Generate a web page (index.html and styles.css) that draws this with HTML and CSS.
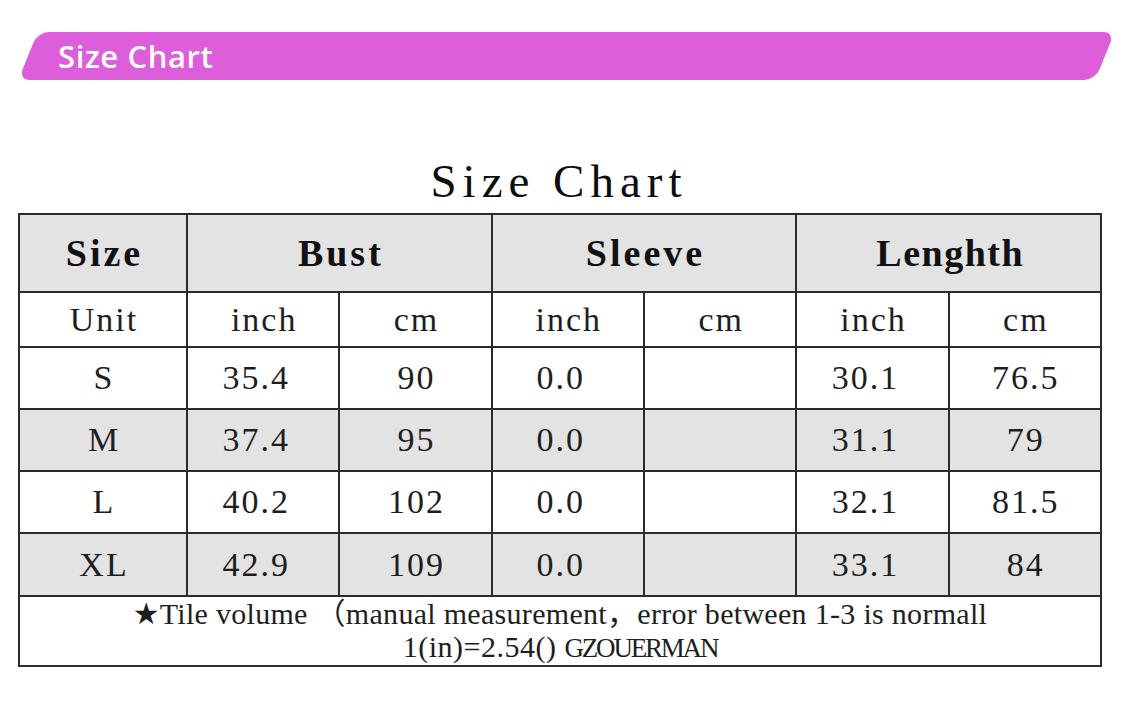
FILE: index.html
```html
<!DOCTYPE html>
<html lang="en">
<head>
<meta charset="utf-8">
<title>Size Chart</title>
<link rel="stylesheet" href="styles.css">
</head>
<body>
<div class="banner"><span class="banner-text">Size Chart</span></div>
<div class="sheet">
  <h1 class="title">Size Chart</h1>
  <table class="chart">
    <colgroup>
      <col class="col-size">
      <col class="col-val"><col class="col-val">
      <col class="col-val"><col class="col-val">
      <col class="col-val"><col class="col-val">
    </colgroup>
    <tr class="row-head">
      <th>Size</th>
      <th colspan="2">Bust</th>
      <th colspan="2">Sleeve</th>
      <th colspan="2" class="th-tight">Lenghth</th>
    </tr>
    <tr class="row-unit">
      <td>Unit</td>
      <td>inch</td>
      <td>cm</td>
      <td>inch</td>
      <td>cm</td>
      <td>inch</td>
      <td>cm</td>
    </tr>
    <tr class="row-data">
      <td>S</td>
      <td class="inch">35.4</td>
      <td>90</td>
      <td class="inch">0.0</td>
      <td></td>
      <td class="inch">30.1</td>
      <td>76.5</td>
    </tr>
    <tr class="row-data row-alt">
      <td>M</td>
      <td class="inch">37.4</td>
      <td>95</td>
      <td class="inch">0.0</td>
      <td></td>
      <td class="inch">31.1</td>
      <td>79</td>
    </tr>
    <tr class="row-data">
      <td>L</td>
      <td class="inch">40.2</td>
      <td>102</td>
      <td class="inch">0.0</td>
      <td></td>
      <td class="inch">32.1</td>
      <td>81.5</td>
    </tr>
    <tr class="row-data row-alt row-last">
      <td>XL</td>
      <td class="inch">42.9</td>
      <td>109</td>
      <td class="inch">0.0</td>
      <td></td>
      <td class="inch">33.1</td>
      <td>84</td>
    </tr>
    <tr class="row-note">
      <td colspan="7">
        <span class="note-line"><span class="star">★</span>Tile volume （manual measurement，error between 1-3 is normall</span>
        <span class="note-line note-line-2">1(in)=2.54() <span class="brand">GZOUERMAN</span></span>
      </td>
    </tr>
  </table>
</div>
</body>
</html>
```

FILE: styles.css
```css
html, body {
  margin: 0;
  padding: 0;
  background: #ffffff;
}

body {
  font-family: "Liberation Serif", "Noto Sans CJK SC", serif;
  color: #1a1a1a;
}

/* ---------- top banner ---------- */
.banner {
  position: relative;
  height: 48px;
  margin: 32px 20px 0 28px;
  padding-left: 30px;
  display: flex;
  align-items: center;
}

.banner::before {
  content: "";
  position: absolute;
  inset: 0;
  background: #dd5edb;
  border-radius: 11px;
  transform: skewX(-22deg);
}

.banner-text {
  position: relative;
  color: #ffffff;
  font-family: "Open Sans", "Liberation Sans", sans-serif;
  font-weight: 600;
  font-size: 31px;
  letter-spacing: 0.6px;
}

/* ---------- sheet ---------- */
.sheet {
  width: 1082px;
  margin-left: 18px;
}

.title {
  margin: 76px 0 7px;
  height: 50px;
  line-height: 50px;
  font-size: 47px;
  font-weight: normal;
  letter-spacing: 6px;
  text-align: center;
  color: #0d0d0d;
}

.chart {
  width: 1082px;
  border-collapse: collapse;
  table-layout: fixed;
}

.col-size { width: 168px; }
.col-val { width: 152.33px; }

.chart th,
.chart td {
  border: 2px solid #2b2b2b;
  padding: 0;
  text-align: center;
  vertical-align: middle;
}

.row-head th {
  height: 76px;
  padding-left: 3px;
  background: #e3e3e3;
  font-size: 38px;
  font-weight: bold;
  letter-spacing: 3px;
  color: #111;
}

.row-head th.th-tight {
  letter-spacing: 1.5px;
}

.row-unit td,
.row-data td {
  padding-left: 2px;
  font-size: 34px;
  letter-spacing: 2px;
  color: #1e1e1e;
}

.row-unit td {
  height: 53px;
}

.row-data td {
  height: 60px;
}

.row-data td.inch {
  padding-right: 16px;
}

.row-alt td {
  background: #e3e3e3;
}

.row-last td {
  height: 61px;
}

.row-note td {
  height: 67px;
  font-size: 30px;
  line-height: 33px;
  letter-spacing: 0.3px;
  color: #1e1e1e;
}

.note-line {
  display: block;
}

.note-line-2 {
  letter-spacing: 0.5px;
}

.brand {
  font-size: 27px;
  letter-spacing: -2.2px;
}

.star {
  font-family: "DejaVu Sans", sans-serif;
  font-size: 30px;
  letter-spacing: 0;
}
```
